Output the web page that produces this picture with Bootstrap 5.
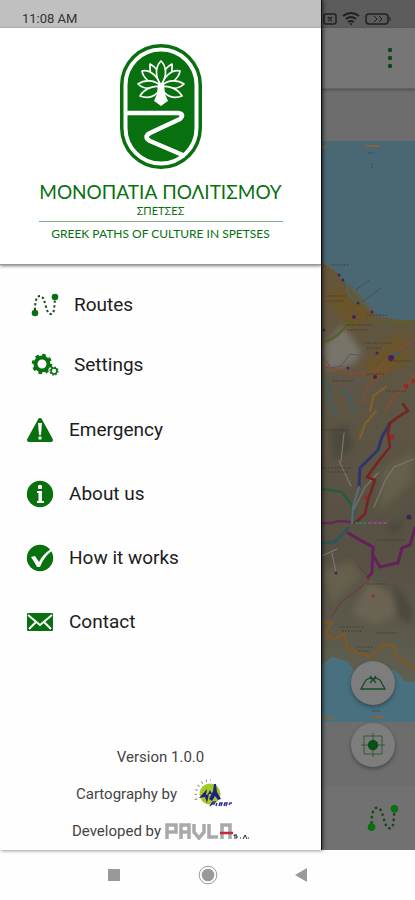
<!DOCTYPE html>
<html lang="en">
<head>
<meta charset="utf-8">
<meta name="viewport" content="width=device-width, initial-scale=1">
<title>Greek Paths of Culture in Spetses</title>
<link href="https://cdn.jsdelivr.net/npm/bootstrap@5.3.0/dist/css/bootstrap.min.css" rel="stylesheet">
<style>
:root{--leaf:#08700f}
body{font-family:Roboto,"Open Sans",sans-serif;background:#fefefe;color:#1c1c1c}
svg{display:block}
.drawer{width:322px;background:#fefefe;border-right:1px solid #111;box-shadow:1px 0 4px rgba(0,0,0,.6);z-index:2}
.clock-strip{height:28px;background:#c0c0c0;font-size:13px;line-height:20px;padding:9px 22px 0;color:#333}
.brand-panel{height:237px;padding-top:15px;background:#fff;color:var(--leaf);border-bottom:1px solid #999;box-shadow:0 1px 3px rgba(0,0,0,.5);font-family:Lato,"Open Sans",sans-serif}
.brand-title{font-size:19px;line-height:24px;margin-top:10px}
.brand-place{font-size:11px;line-height:14px}
.brand-sub{font-size:12px;line-height:16px;padding-top:4px;margin-top:3px;width:244px;border-top:1px solid #7fae83;white-space:nowrap}
.menu-list{padding-top:10px}
.menu-link{height:64px;padding-left:26px;gap:15px;font-size:19px;line-height:24px;color:#1c1c1c;text-decoration:none}
.menu-link.inset{height:60px;padding-left:31px}
.menu-list .inset + .menu-link:not(.inset){margin-top:3px}
.credits{font-size:15px;line-height:22px;color:#444;padding-bottom:1px}
.credit-row{height:37px}
.map-credit{gap:16px;padding-right:12px;margin-top:7px}
.backdrop-screen{min-width:0;background:#6d6d6d}
.status-strip{height:28px;background:#5c5c5c;padding:10px 23px 0 0}
.top-bar{height:61px;background:#767676;border-bottom:1px solid #646464;box-shadow:0 1px 3px rgba(0,0,0,.3)}
.top-bar button{padding:0 19px 0 0}
.map-view{margin-top:52px;background:#4a6874}
.map-view svg{width:100%;height:100%}
.tool-space{height:64px}
.fabs{right:20px;bottom:83px;gap:18px}
.fabs button{width:44px;height:44px;background:#7d7d7d;box-shadow:0 2px 4px rgba(0,0,0,.35)}
.bottom-bar{height:64px;background:#717171;padding-right:16px}
.sys-nav{height:50px;background:#fefefe;padding:0 107px}
.sys-nav button,.plain-btn{background:none;border:0;padding:0}
</style>
<script src="https://cdn.jsdelivr.net/npm/bootstrap@5.3.0/dist/js/bootstrap.bundle.min.js"></script>
</head>
<body class="min-vh-100 d-flex flex-column">
<svg width="0" height="0" class="position-absolute" aria-hidden="true"><defs>
<symbol id="route" viewBox="0 0 28 24"><path d="M4 17C4 10 5 3 9 3c6 0 5 18 11 18 4 0 3-9 4-14" fill="none" stroke="#17451b" stroke-width="2" stroke-dasharray="2.2 2.4"/><circle cx="4" cy="20" r="3.3" fill="#08700f"/><circle cx="24" cy="4" r="3.3" fill="#08700f"/></symbol>
</defs></svg>
<div class="flex-grow-1 d-flex">
<aside class="drawer flex-shrink-0 d-flex flex-column">
  <div class="clock-strip">11:08 AM</div>
  <header class="brand-panel d-flex flex-column align-items-center text-center">
    <svg width="84" height="127" viewBox="0 0 84 127" role="img" aria-label="Logo">
      <rect x="1" y="1" width="82" height="125" rx="41" fill="#08700f"/>
      <rect x="6.5" y="6.5" width="71" height="114" rx="35.500" fill="none" stroke="#fff" stroke-width="4"/>
      <path d="M7 70H59Q66 71 61 76L31 90Q24 94 31 98L66 113" fill="none" stroke="#fff" stroke-width="4.500" stroke-linejoin="round"/>
      <g fill="#08700f" stroke="#fff" stroke-width="1.700" stroke-linejoin="round">
        <path d="M42 43C29 34 31 26 31 21 37 24 43 32 42 43Z"/>
        <path d="M42 43C55 34 53 26 53 21 47 24 41 32 42 43Z"/>
        <path d="M42 44C32 42 24 35 23 28 32 26 40 35 42 44Z"/>
        <path d="M42 44C52 42 60 35 61 28 52 26 44 35 42 44Z"/>
        <path d="M42 43C33 47 24 46 19 41 26 36 36 37 42 43Z"/>
        <path d="M42 43C51 47 60 46 65 41 58 36 48 37 42 43Z"/>
        <path d="M42 44C38 54 29 56 21 53 25 46 34 42 42 44Z"/>
        <path d="M42 44C46 54 55 56 63 53 59 46 50 42 42 44Z"/>
        <path d="M42 42C35 32 37 23 42 18 47 23 49 32 42 42Z"/>
      </g>
      <path d="M39 41h6l1 10 3 7-3 2-4 3-4-3-3-2 3-7z" fill="#fff"/>
    </svg>
    <div class="brand-title" lang="el">ΜΟΝΟΠΑΤΙΑ ΠΟΛΙΤΙΣΜΟΥ</div>
    <div class="brand-place" lang="el">ΣΠΕΤΣΕΣ</div>
    <div class="brand-sub">GREEK PATHS OF CULTURE IN SPETSES</div>
  </header>
  <nav class="menu-list d-flex flex-column" aria-label="Main menu">
    <a href="#" class="menu-link inset d-flex align-items-center"><svg width="28" height="24"><use href="#route"/></svg>Routes</a>
    <a href="#" class="menu-link inset d-flex align-items-center"><svg width="28" height="24" viewBox="0 0 28 24"><g fill="none" stroke="#08700f"><circle cx="11" cy="11" r="6.500" stroke-width="4"/><circle cx="11" cy="11" r="9" stroke-width="2.500" stroke-dasharray="3.500 3.568"/><circle cx="23" cy="18" r="2.900" stroke-width="1.500"/><circle cx="23" cy="18" r="4" stroke-width="1.300" stroke-dasharray="1.600 1.542"/></g></svg>Settings</a>
    <a href="#" class="menu-link d-flex align-items-center"><svg width="28" height="26" viewBox="0 0 28 26"><path d="M14 3 25 23H3Z" fill="#08700f" stroke="#08700f" stroke-width="4" stroke-linejoin="round"/><path d="M12 6h4l-1 12h-2z" fill="#fff"/><circle cx="14" cy="21" r="1.700" fill="#fff"/></svg>Emergency</a>
    <a href="#" class="menu-link d-flex align-items-center"><svg width="28" height="28" viewBox="0 0 28 28"><circle cx="14" cy="14" r="13.200" fill="#08700f"/><path d="M11 11h5v10h2v2h-7v-2h1.500v-8H11z" fill="#fff"/><rect x="12" y="5" width="4" height="4" rx="1" fill="#fff"/></svg>About us</a>
    <a href="#" class="menu-link d-flex align-items-center"><svg width="28" height="28" viewBox="0 0 28 28"><circle cx="14" cy="14" r="13.200" fill="#08700f"/><path d="M5 13l4-1 4 6c3-6 7-10 12-13l1 2c-6 4-9 9-12 16h-3C9 19 7 16 5 13z" fill="#fff"/></svg>How it works</a>
    <a href="#" class="menu-link d-flex align-items-center"><svg width="28" height="20" viewBox="0 0 28 20"><rect x="1" y="1" width="26" height="18" rx="1" fill="#08700f"/><path d="M2 3l12 10L26 3M3 17l7-7M25 17l-7-7" fill="none" stroke="#fff" stroke-width="2"/></svg>Contact</a>
  </nav>
  <footer class="credits mt-auto d-flex flex-column align-items-center">
    <div>Version 1.0.0</div>
    <div class="credit-row map-credit d-flex align-items-center"><span>Cartography by</span>
      <svg width="40" height="32" viewBox="0 0 40 32" role="img" aria-label="Cartographer logo"><circle cx="17" cy="16" r="10.500" fill="#a3cb28"/><path d="M3 22C1 10 7 3 18 2" fill="none" stroke="#999" stroke-width="2.500" stroke-dasharray="1.200 3.500"/><path d="M6 20l8-9-1 6 3-1-2 9-2-6zM15 16l2-4 2 4zM20 13l1-7h2l1 8 4 7-3 1-3-4-3 5-3-2z" fill="#202080"/><path d="M17 28l3-4h2l-1 2h-2M23 28l1-3M26 28l1-3h2l-1 3M31 28l1-3h2l-1 3M36 27l1-2h2" fill="none" stroke="#33339b" stroke-width="1.500"/></svg></div>
    <div class="credit-row d-flex align-items-center gap-1"><span>Developed by</span>
      <svg width="84" height="18" viewBox="0 0 84 18" role="img" aria-label="PAVLA S.A."><g fill="none" stroke="#a9a9a9" stroke-width="3.500"><path d="M2 17V3h9v7H2M16 17V3h8v14M16 10h8M29 2v8l5 6 5-6V2M44 2v13h9M57 17V3h8v14"/></g><path d="M55 11h13" stroke="#c6283a" stroke-width="2.500"/><path d="M72 13h-3v1h3v2h-3M75 16h1M78 17l2-4 2 4M83 16h1" fill="none" stroke="#222"/></svg></div>
  </footer>
</aside>
<main class="backdrop-screen flex-grow-1 d-flex flex-column position-relative">
  <div class="status-strip d-flex justify-content-end">
    <svg width="70" height="18" viewBox="0 0 70 18" fill="none" stroke="#202020" aria-hidden="true"><path d="M4 4h8q2 0 2 2v6q0 2-2 2H4q-2 0-2-2V6q0-2 2-2zM6 7l4 4M10 7l-4 4" stroke-width="1.500"/><path d="M21 6q8-6 16 0M24 9q5-4 10 0M26 12q3-2 6 0" stroke-width="2"/><circle cx="29" cy="14" r=".8"/><rect x="44" y="4" width="22" height="10" rx="3" stroke-width="1.500"/><path d="M68 7v4M52 6l3 3-3 3M57 6l3 3-3 3"/></svg>
  </div>
  <div class="top-bar d-flex align-items-center justify-content-end"><button class="plain-btn" aria-label="More options"><svg width="12" height="24" viewBox="0 0 12 24" fill="#0c4714"><circle cx="6" cy="4" r="2.200"/><circle cx="6" cy="12" r="2.200"/><circle cx="6" cy="20" r="2.200"/></svg></button></div>
  <div class="map-view flex-grow-1 overflow-hidden">
  <svg viewBox="0 0 93 581" preserveAspectRatio="xMidYMid slice" role="img" aria-label="Map of Spetses">
    <defs><linearGradient id="land" x1="0" y1="0" x2="0" y2="1"><stop offset="0" stop-color="#65563a"/><stop offset=".3" stop-color="#5e5644"/><stop offset=".7" stop-color="#575144"/><stop offset="1" stop-color="#5f5f50"/></linearGradient>
    <filter id="haze"><feGaussianBlur stdDeviation="3"/></filter></defs>
    <rect width="93" height="581" fill="#4a6874"/><rect y="500" width="93" height="81" fill="#49707f"/>
    <path d="M0 121L15 132 26 146 38 164 55 177 70 180 93 181V541L83 540 72 528 56 540 35 534 25 520 10 516 0 524Z" fill="url(#land)"/>
    <g filter="url(#haze)"><path d="M2 205l18-20 12 15 8 12-10 12-25 5z" fill="#77756a"/><path d="M46 440l22 12 8 20-22 12-24-12z" fill="#6b6453"/><path d="M60 330l30-20v30l-32 30zM0 430l30-10 10 15-30 28z" fill="#655e4c"/><path d="M8 290l16-8 8 25-20 14zM60 385l25-7-12 16zM70 440l20 25v20l-15-10z" fill="#4b493c"/><path d="M3 150l25-5 25 30-28 15zM40 220l40-30 10 30-40 20z" fill="#6b552c"/></g>
    <g fill="none" stroke-linejoin="round" stroke-linecap="round">
      <path d="M0 123l15 9 11 14 8 16 15 12 21 5 23 1" stroke="#75502e" stroke-width="1.500"/>
      <path d="M0 202q18-6 28-22M50 179l20 3 23-1" stroke="#59602f" stroke-width="2.500"/>
      <path d="M16 133l9 10 2 11 9 9" stroke="#346f79" stroke-width="1.500"/>
      <path d="M0 225l18 5 15 3 20-2 14-15 12-9 14-9M40 261l8-19 10-8 8-8M63 270l9-15 11-9 10-12" stroke="#824e30" stroke-width="2"/>
      <path d="M0 215l9 12 10-2 9-12 22 3 12-10M8 229l15 16 17-5 23 15M33 230l-4 22 17 4M66 217l16-8 11-8" stroke="#605262"/>
      <path d="M0 237l8 10-3 11 9 15M19 250l10 6 2 15M70 214l8-3" stroke="#37616a" stroke-width="2"/>
      <path d="M48 270l4-16 12-8M44 281l-6 16M54 270l-9 11" stroke="#846224" stroke-width="2"/>
      <path d="M92 318L72 326 63 340 52 366M17 320l12 25M22 292l-3 28M0 415l15-7M10 412l4 20M31 370l12-24 13-14" stroke="#77786b" stroke-width="1.200"/>
      <path d="M0 348l20 3 11 15-1 16" stroke="#255d3c" stroke-width="2.500"/>
      <path d="M0 402l13-1 13-14" stroke="#31535b" stroke-width="3"/>
      <path d="M0 382h9l8-2 11 1" stroke="#682659" stroke-width="2.500"/>
      <path d="M68 282l-8 14-4 13-18 18-1 19" stroke="#303768" stroke-width="3"/><path d="M37 346l-6 20-1 16" stroke="#556f80" stroke-width="2"/>
      <path d="M81 263l5 7-10 6-8 6-2 10 2 14-12 15-11 15 8 3-7 20-3 14-10 9" stroke="#762320" stroke-width="2.500"/>
      <path d="M26 392l12 7 13 7-1 26-4 4M51 414l7 12 8-2 10-2 4-15 8-3 5-17" stroke="#661f5d" stroke-width="3"/>
      <path d="M38 427l10 11-14 12-16 12-9 14M40 430l-4-6" stroke="#693b31"/>
      <path d="M0 481l10 1-7 10 8 7 12-7 2 15 23 9 13-12 10 0 5 12 17 12" stroke="#83571f" stroke-width="2"/>
      <path d="M34 382h10" stroke="#2a806f" stroke-width="2" stroke-dasharray="1 3"/><path d="M47 382h17" stroke="#8c4a8c" stroke-width="2" stroke-dasharray="2 3"/>
    </g>
    <g stroke="#393229" stroke-dasharray="2 1" opacity=".65"><path d="M3 155h22M5 160h18M24 184h25M25 189h20M43 202h26M45 207h15M10 124h18M45 174h20M68 220h22M45 233h18M2 289h25M0 327h30M3 331h24M45 443h20M18 486h24M20 490h20M34 506h17M36 510h12M55 492h20M11 240h20M64 250h20M55 399h28" fill="none"/></g>
    <g fill="#45205f"><circle cx="17" cy="134" r="1.500"/><circle cx="21" cy="139" r="1.500"/><circle cx="32" cy="176" r="2"/><circle cx="50" cy="171" r="1.500"/><circle cx="36" cy="162" r="1.500"/><circle cx="55" cy="212" r="1.500"/><circle cx="69" cy="217" r="3"/><circle cx="53" cy="236" r="2"/><circle cx="2" cy="189" r="1.500"/><circle cx="14" cy="432" r="1.500"/><circle cx="87" cy="376" r="2.500"/><circle cx="26" cy="227" r="1.500"/></g>
    <g fill="#99262a"><circle cx="84" cy="245" r="2.500"/><circle cx="91" cy="240" r="2"/><circle cx="70" cy="296" r="2.500"/><circle cx="44" cy="356" r="2"/><circle cx="51" cy="455" r="1.500"/></g>
    <path d="M44 5h13M0 6h5M50 576h12M0 577h12" stroke="#88633a" stroke-width="2"/><path d="M46 12h7M50 22v5M34 149l13-10M40 161l19-14M50 570h9" stroke="#354a52" stroke-dasharray="2 1"/>
  </svg></div>
  <div class="tool-space"></div>
  <div class="bottom-bar d-flex align-items-center justify-content-end"><button class="plain-btn" aria-label="Show routes"><svg width="32" height="28"><use href="#route"/></svg></button></div>
  <div class="fabs position-absolute d-flex flex-column">
    <button class="plain-btn rounded-circle d-flex align-items-center justify-content-center" aria-label="Terrain"><svg width="26" height="16" viewBox="0 0 26 16"><path d="M1 14L6 5l4-2 3 2 3-2 4 2 5 9zM10 1l6 7M16 1l-6 7" fill="none" stroke="#174a25" stroke-width="1.300"/></svg></button>
    <button class="plain-btn rounded-circle d-flex align-items-center justify-content-center" aria-label="Center map"><svg width="26" height="26" viewBox="0 0 26 26"><path d="M4 4h18v18H4zM13 1v24M1 13h24" fill="none" stroke="#315a36"/><circle cx="13" cy="13" r="5.200" fill="#075213"/></svg></button>
  </div>
</main>
</div>
<nav class="sys-nav d-flex align-items-center justify-content-between" aria-label="System">
  <button aria-label="Recent apps"><svg width="14" height="14"><rect x="1" y="1" width="12" height="12" fill="#999"/></svg></button>
  <button aria-label="Home"><svg width="20" height="20" viewBox="0 0 20 20"><circle cx="10" cy="10" r="8.800" fill="none" stroke="#999"/><circle cx="10" cy="10" r="6.300" fill="#999"/></svg></button>
  <button aria-label="Back"><svg width="14" height="16"><path d="M13 1v14L1 8z" fill="#999"/></svg></button>
</nav>
</body>
</html>
